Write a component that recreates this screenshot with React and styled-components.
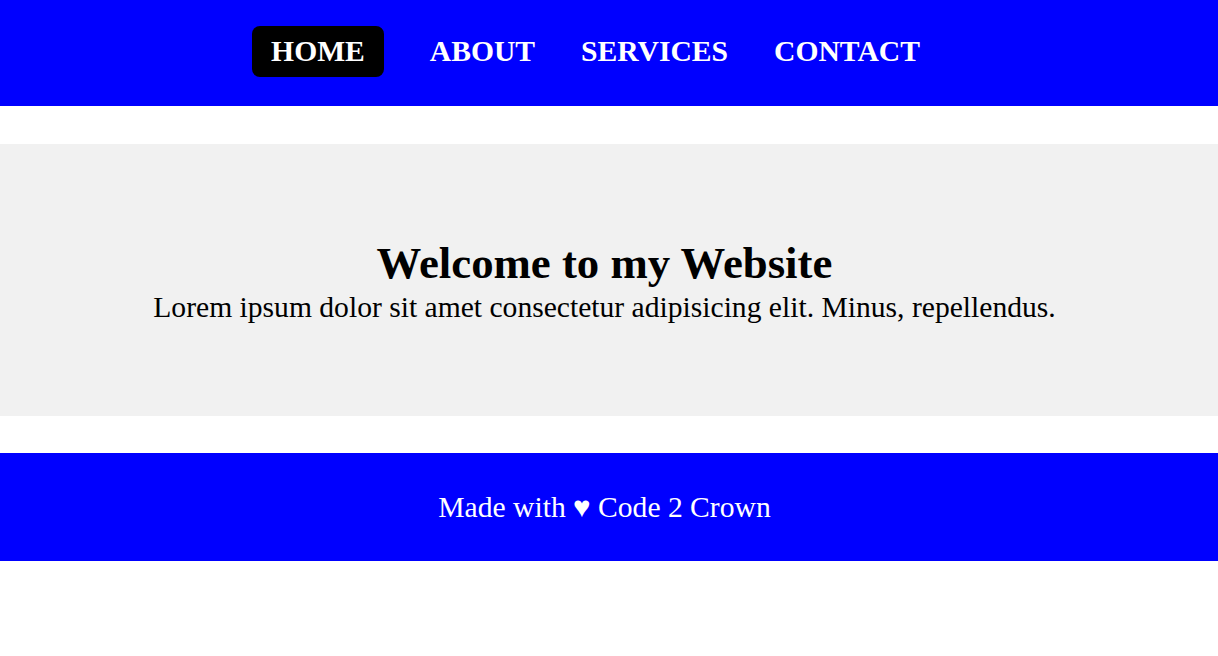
import React from 'react';
import styled, { createGlobalStyle } from 'styled-components';

const GlobalStyle = createGlobalStyle`
  html, body {
    margin: 0;
    padding: 0;
    background: #ffffff;
    font-family: "Liberation Serif", "Times New Roman", serif;
  }
`;

const Header = styled.header`
  background: #0000ff;
  padding: 26px 0 29px;
`;

const NavList = styled.ul`
  display: flex;
  justify-content: center;
  align-items: center;
  list-style: none;
  margin: 0;
  padding: 0;
`;

const NavItem = styled.li`
  margin-right: 46px;
`;

const NavLink = styled.a`
  display: block;
  padding: ${(p) => (p.$active ? '9px 19px' : '9px 0')};
  border-radius: 8px;
  color: #ffffff;
  font-size: 29.6px;
  font-weight: bold;
  line-height: 33px;
  text-decoration: none;
  background: ${(p) => (p.$active ? '#000000' : 'transparent')};
`;

const Hero = styled.section`
  margin: 38px 0 37px;
  height: 272px;
  background: #f1f1f1;
  display: flex;
  flex-direction: column;
  justify-content: center;
  align-items: center;
  text-align: center;
  padding: 2px 9px 0 0;
  box-sizing: border-box;
`;

const Title = styled.h1`
  margin: 0;
  font-size: 44.8px;
  font-weight: bold;
  color: #000000;
  line-height: 1.15;
`;

const Lead = styled.p`
  margin: 0;
  font-size: 29.6px;
  color: #000000;
  line-height: 1.15;
`;

const Footer = styled.footer`
  background: #0000ff;
  height: 108px;
  display: flex;
  align-items: center;
  justify-content: center;
  padding-right: 9px;
  box-sizing: border-box;
  color: #ffffff;
  font-size: 29.6px;
`;

const links = ['HOME', 'ABOUT', 'SERVICES', 'CONTACT'];

export default function App() {
  return (
    <>
      <GlobalStyle />
      <Header>
        <nav>
          <NavList>
            {links.map((label, i) => (
              <NavItem key={label}>
                <NavLink href="#" $active={i === 0}>{label}</NavLink>
              </NavItem>
            ))}
          </NavList>
        </nav>
      </Header>
      <Hero>
        <Title>Welcome to my Website</Title>
        <Lead>Lorem ipsum dolor sit amet consectetur adipisicing elit. Minus, repellendus.</Lead>
      </Hero>
      <Footer>Made with ♥ Code 2 Crown</Footer>
    </>
  );
}
